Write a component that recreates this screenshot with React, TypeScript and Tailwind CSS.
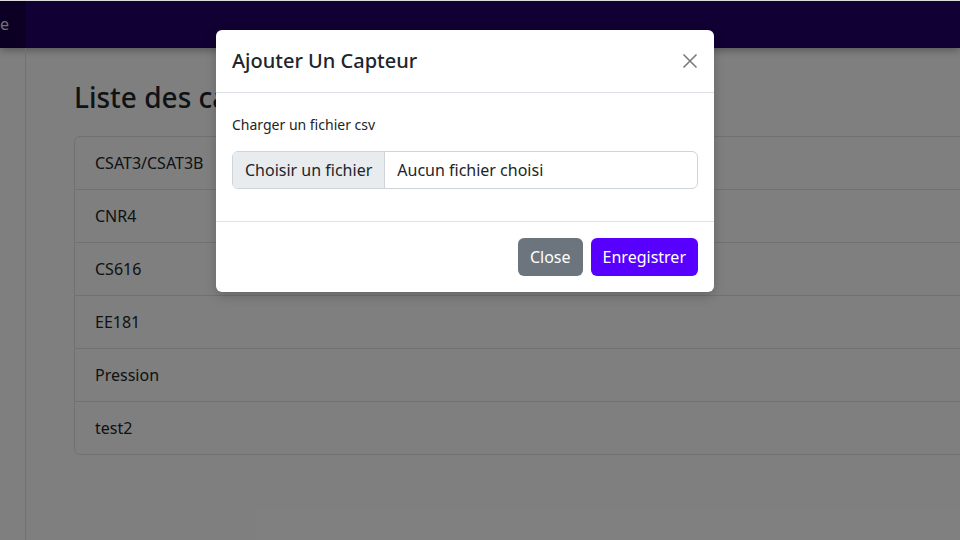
import React from 'react';

const capteurs = ['CSAT3/CSAT3B', 'CNR4', 'CS616', 'EE181', 'Pression', 'test2'];

const App: React.FC = () => {
  return (
    <div
      className="relative w-full h-[540px] overflow-hidden bg-white text-[#212529]"
      style={{ fontFamily: '"Noto Sans", "Open Sans", sans-serif' }}
    >
      {/* page behind the modal */}
      <div className="flex flex-col h-full">
        <nav className="flex h-12 shrink-0 bg-[#220066] shadow-[0_2px_8px_rgba(0,0,0,0.35)]">
          <div className="w-[26px] h-full bg-[#160048] flex items-center text-[#e0e0e0] text-base">
            <span className="-mt-px">e</span>
          </div>
        </nav>

        <div className="flex flex-1 min-h-0">
          <aside className="w-[26px] shrink-0 border-r border-[#dee2e6]" />
          <main className="flex-1 overflow-hidden pl-12 pt-8">
            <h2 className="text-[28px] leading-[34px] font-medium mb-[22px] whitespace-nowrap">Liste des capteurs</h2>
            <ul className="w-[1000px] border border-[#dee2e6] rounded-md">
              {capteurs.map((c, i) => (
                <li
                  key={c}
                  className={`px-5 py-[14px] text-base leading-6 ${i < capteurs.length - 1 ? 'border-b border-[#dee2e6]' : ''}`}
                >
                  {c}
                </li>
              ))}
            </ul>
          </main>
        </div>
      </div>

      {/* backdrop */}
      <div className="absolute inset-0 bg-black/50" />
      <div className="absolute left-0 right-0 top-0 h-px bg-[#dcdcdc]" />

      {/* modal */}
      <div className="absolute left-[216px] top-[30px] w-[498px] bg-white rounded-md shadow-[0_4px_12px_rgba(0,0,0,0.2)]">
        <div className="flex items-center justify-between px-4 py-4 border-b border-[#dee2e6]">
          <h5 className="text-xl leading-[30px] font-medium">Ajouter Un Capteur</h5>
          <button className="w-4 h-4 flex items-center justify-center text-[#7a7a7a]">
            <svg width="16" height="16" viewBox="0 0 16 16" fill="none" stroke="currentColor" strokeWidth="1.6">
              <path d="M1.5 1.5l13 13M14.5 1.5l-13 13" />
            </svg>
          </button>
        </div>

        <div className="px-4 pt-[21px] pb-[32px]">
          <label className="block text-sm leading-[21px] mb-4">Charger un fichier csv</label>
          <div className="flex h-[38px] border border-[#ced4da] rounded-md overflow-hidden text-base">
            <div className="flex items-center px-3 bg-[#e9ecef] border-r border-[#ced4da]">Choisir un fichier</div>
            <div className="flex items-center px-3">Aucun fichier choisi</div>
          </div>
        </div>

        <div className="flex justify-end gap-2 p-4 border-t border-[#dee2e6]">
          <button className="h-[38px] px-3 rounded-md bg-[#6c757d] text-white text-base">Close</button>
          <button className="h-[38px] px-3 rounded-md bg-[#5800ff] text-white text-base">Enregistrer</button>
        </div>
      </div>
    </div>
  );
};

export default App;
